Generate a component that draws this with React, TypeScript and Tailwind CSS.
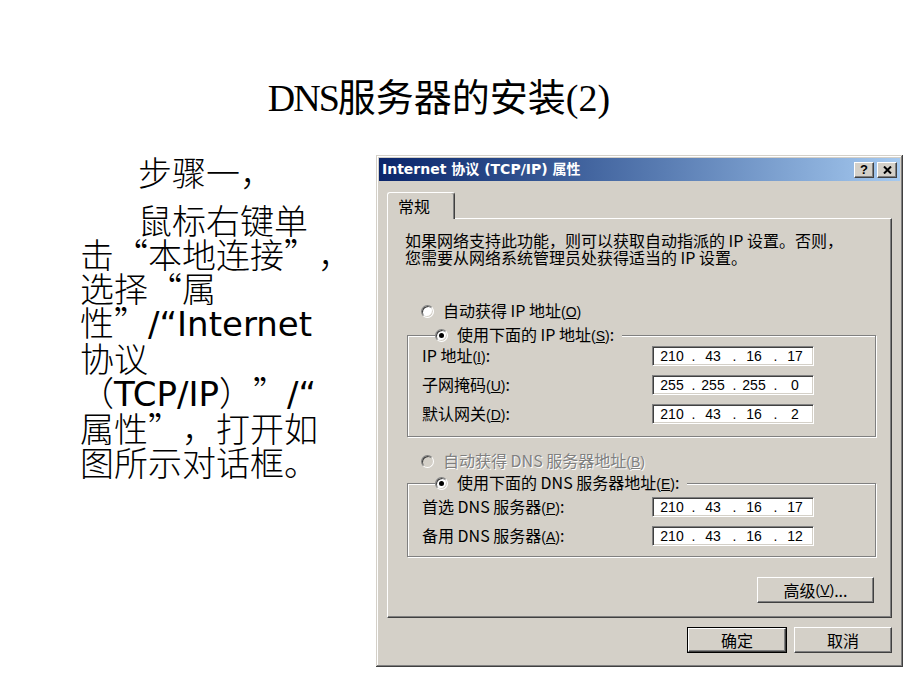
import { Fragment, type ReactNode } from 'react';

// full-width CJK quote cell
function Q({ c, open = false }: { c: string; open?: boolean }) {
  return (
    <span
      className={`inline-block w-[34px] font-['Noto_Sans_CJK_SC',sans-serif] ${open ? 'text-right' : 'text-left'}`}
    >
      {c}
    </span>
  );
}

function Latin({ children }: { children: ReactNode }) {
  return <span className="font-['DejaVu_Sans',sans-serif] font-normal">{children}</span>;
}

function Radio({ checked = false, disabled = false }: { checked?: boolean; disabled?: boolean }) {
  return (
    <span
      className={`flex h-[13px] w-[13px] shrink-0 items-center justify-center rounded-full border border-t-[#808080] border-l-[#808080] border-r-white border-b-white shadow-[inset_1px_1px_0_#404040,inset_-1px_-1px_0_#d4d0c8] ${
        disabled ? 'bg-[#d4d0c8]' : 'bg-white'
      }`}
    >
      {checked && <span className="h-[5px] w-[5px] rounded-full bg-black" />}
    </span>
  );
}

function Key({ k }: { k: string }) {
  return (
    <span className="font-['Liberation_Sans',sans-serif] text-[14px]">
      (<span className="underline">{k}</span>)
    </span>
  );
}

function IpField({ parts }: { parts: string[] }) {
  return (
    <div className="flex h-[20px] w-[162px] shrink-0 items-center border border-t-[#808080] border-l-[#808080] border-r-white border-b-white bg-white pl-[4px] font-['Liberation_Sans',sans-serif] text-[14px] text-black shadow-[inset_1px_1px_0_#404040,inset_-1px_-1px_0_#d4d0c8]">
      {parts.map((p, i) => (
        <Fragment key={i}>
          {i > 0 && <span className="w-[11px] pl-[2px] text-center">.</span>}
          <span className="w-[30px] text-center">{p}</span>
        </Fragment>
      ))}
    </div>
  );
}

function Row({ label, parts }: { label: ReactNode; parts: string[] }) {
  return (
    <div className="flex h-[20px] items-center">
      <span className="flex-1">{label}</span>
      <IpField parts={parts} />
    </div>
  );
}

function Btn({ children, w, def = false }: { children: ReactNode; w: string; def?: boolean }) {
  return (
    <div className={`${w} h-[26px] ${def ? 'border border-black' : ''}`}>
      <div className="flex h-full w-full items-center justify-center border border-t-white border-l-white border-r-[#404040] border-b-[#404040] bg-[#d4d0c8] text-[16px] text-black shadow-[inset_-1px_-1px_0_#808080]">
        {children}
      </div>
    </div>
  );
}

function CapBtn({ children }: { children: ReactNode }) {
  return (
    <div className="flex h-[16px] w-[20px] items-center justify-center border border-t-white border-l-white border-r-[#404040] border-b-[#404040] bg-[#d4d0c8] shadow-[inset_-1px_-1px_0_#808080]">
      {children}
    </div>
  );
}

function Dialog() {
  return (
    <div className="flex h-[512px] w-[527px] shrink-0 flex-col bg-[#d4d0c8] p-[3px] font-['Noto_Sans_CJK_SC',sans-serif] text-black shadow-[inset_-1px_-1px_0_#404040,inset_1px_1px_0_#d4d0c8,inset_-2px_-2px_0_#808080,inset_2px_2px_0_#fff]">
      {/* caption */}
      <div className="flex h-[23px] items-center bg-linear-to-r from-[#0a246a] to-[#a6caf0] pl-[3px] pr-[3px]">
        <span className="flex-1 font-['DejaVu_Sans','Noto_Sans_CJK_SC',sans-serif] text-[14px] font-bold text-white">
          Internet 协议 (TCP/IP) 属性
        </span>
        <CapBtn>
          <span className="font-['Liberation_Sans',sans-serif] text-[13px] leading-none font-bold">?</span>
        </CapBtn>
        <div className="w-[3px]" />
        <CapBtn>
          <svg width="9" height="8" viewBox="0 0 9 8">
            <path d="M1 0.5 L8 7.5 M8 0.5 L1 7.5" stroke="#000" strokeWidth="2" />
          </svg>
        </CapBtn>
      </div>

      <div className="flex flex-1 flex-col px-[8px] pt-[11px]">
        {/* tab */}
        <div className="relative z-10 -mb-px flex h-[27px] w-[68px] items-center rounded-t-[3px] border-t border-l border-r border-t-white border-l-white border-r-[#404040] bg-[#d4d0c8] pl-[10px] text-[16px] shadow-[inset_-1px_0_0_#808080]">
          常规
        </div>

        {/* page */}
        <div className="flex h-[400px] flex-col border border-t-white border-l-white border-r-[#404040] border-b-[#404040] pl-[17px] pr-[15px] pt-[13px] text-[16px] leading-[17px] shadow-[inset_-1px_-1px_0_#808080]">
          <p>
            如果网络支持此功能，则可以获取自动指派的 IP 设置。否则，
            <br />
            您需要从网络系统管理员处获得适当的 IP 设置。
          </p>

          <div className="mt-[35px] ml-[16px] flex h-[20px] items-center gap-[9px]">
            <Radio />
            <span>
              自动获得 IP 地址<Key k="O" />
            </span>
          </div>

          <fieldset className="mt-[4px] ml-[2px] border border-[#808080] pt-[1px] pr-[61px] pb-[12px] pl-[14px] shadow-[inset_1px_1px_0_#fff,1px_1px_0_#fff]">
            <legend className="ml-[13px] flex h-[20px] items-center gap-[9px] bg-[#d4d0c8] pr-[8px]">
              <Radio checked />
              <span>
                使用下面的 IP 地址<Key k="S" />:
              </span>
            </legend>
            <div className="flex flex-col gap-[9px]">
              <Row label={<>IP 地址<Key k="I" />:</>} parts={['210', '43', '16', '17']} />
              <Row label={<>子网掩码<Key k="U" />:</>} parts={['255', '255', '255', '0']} />
              <Row label={<>默认网关<Key k="D" />:</>} parts={['210', '43', '16', '2']} />
            </div>
          </fieldset>

          <div className="mt-[14px] ml-[16px] flex h-[20px] items-center gap-[9px] text-[#808080] [text-shadow:1px_1px_0_#fff]">
            <Radio disabled />
            <span>
              自动获得 DNS 服务器地址<Key k="B" />
            </span>
          </div>

          <fieldset className="mt-[2px] ml-[2px] border border-[#808080] pt-[4px] pr-[61px] pb-[10px] pl-[14px] shadow-[inset_1px_1px_0_#fff,1px_1px_0_#fff]">
            <legend className="ml-[13px] flex h-[20px] items-center gap-[9px] bg-[#d4d0c8] pr-[8px]">
              <Radio checked />
              <span>
                使用下面的 DNS 服务器地址<Key k="E" />:
              </span>
            </legend>
            <div className="flex flex-col gap-[9px]">
              <Row label={<>首选 DNS 服务器<Key k="P" />:</>} parts={['210', '43', '16', '17']} />
              <Row label={<>备用 DNS 服务器<Key k="A" />:</>} parts={['210', '43', '16', '12']} />
            </div>
          </fieldset>

          <div className="mt-[20px] mr-[2px] self-end">
            <Btn w="w-[117px]">
              高级<Key k="V" />...
            </Btn>
          </div>
        </div>

        <div className="mt-[9px] flex justify-end gap-[7px]">
          <Btn w="w-[100px]" def>
            确定
          </Btn>
          <Btn w="w-[98px]">取消</Btn>
        </div>
      </div>
    </div>
  );
}

export default function App() {
  return (
    <div className="h-[690px] w-[920px] overflow-hidden bg-white text-black">
      <h1 className="pt-[78px] pr-[42px] text-center font-['Liberation_Serif','Noto_Sans_CJK_SC',serif] text-[38px] leading-[40px] font-normal">
        <span className="tracking-[-2px]">DNS</span>服务器的安装(2)
      </h1>

      <div className="mt-[37px] flex">
        {/* left text */}
        <div className="w-[376px] shrink-0 pl-[80px] font-['Noto_Sans_CJK_SC',sans-serif] text-[34px] leading-[34px] font-light whitespace-nowrap">
          <div className="pl-[58px]">步骤一，</div>
          <div className="mt-[14px] pl-[58px]">鼠标右键单</div>
          <div>
            击<Q c="“" open />本地连接<Q c="”" />，
          </div>
          <div>
            选择<Q c="“" open />属
          </div>
          <div>
            性<Q c="”" />
            <Latin>/“Internet</Latin>
          </div>
          <div>协议</div>
          <div>
            （<Latin>TCP/IP</Latin>）<Q c="”" />
            <Latin>/“</Latin>
          </div>
          <div>
            属性<Q c="”" />，打开如
          </div>
          <div>图所示对话框。</div>
        </div>

        <Dialog />
      </div>
    </div>
  );
}
